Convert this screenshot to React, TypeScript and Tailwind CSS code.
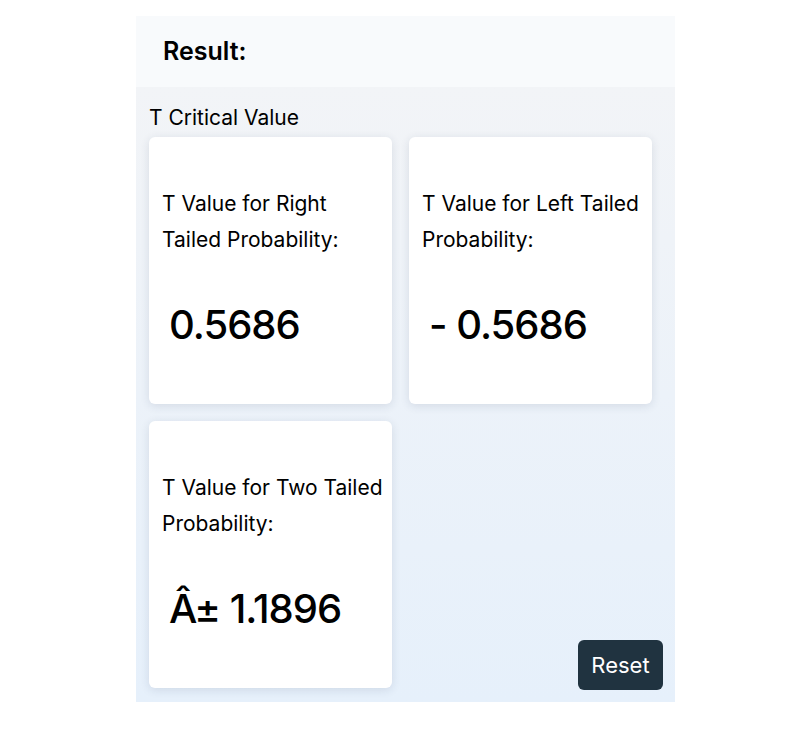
export default function App() {
  const cards = [
    { label: 'T Value for Right Tailed Probability:', value: '0.5686' },
    { label: 'T Value for Left Tailed Probability:', value: '- 0.5686' },
    { label: 'T Value for Two Tailed Probability:', value: 'Â± 1.1896' },
  ];

  return (
    <div className="min-h-screen bg-white pt-[16px] pl-[136px] font-['Inter',sans-serif] text-black">
      <div className="w-[539px]">
        {/* header */}
        <div className="h-[71px] flex items-center pl-[27px] bg-[#f8fafc]">
          <h2 className="text-[25px] font-semibold">Result:</h2>
        </div>

        {/* body */}
        <div className="bg-gradient-to-b from-[#f2f4f7] to-[#e6f0fb] pl-[13px] pr-[23px] pt-[17px] pb-[14px]">
          <div className="text-[21px] leading-[28px] mb-[5px]">T Critical Value</div>
          <div className="grid grid-cols-[243px_243px] gap-[17px]">
            {cards.map((c) => (
              <div
                key={c.label}
                className="h-[267px] rounded-[6px] bg-white shadow-[0_2px_10px_rgba(30,50,80,0.12)] pt-[49px] pl-[13px] pr-[8px]"
              >
                <div className="text-[21px] leading-[36px]">{c.label}</div>
                <div className="mt-[44px] pl-[7px] font-medium text-[40px] leading-[46px] tracking-[-1px]">
                  {c.value}
                </div>
              </div>
            ))}
            <div className="flex items-end justify-end -mr-[11px] -mb-[2px]">
              <button
                type="button"
                className="w-[85px] h-[50px] rounded-[6px] bg-[#203340] text-white text-[22px]"
              >
                Reset
              </button>
            </div>
          </div>
        </div>
      </div>
    </div>
  );
}
